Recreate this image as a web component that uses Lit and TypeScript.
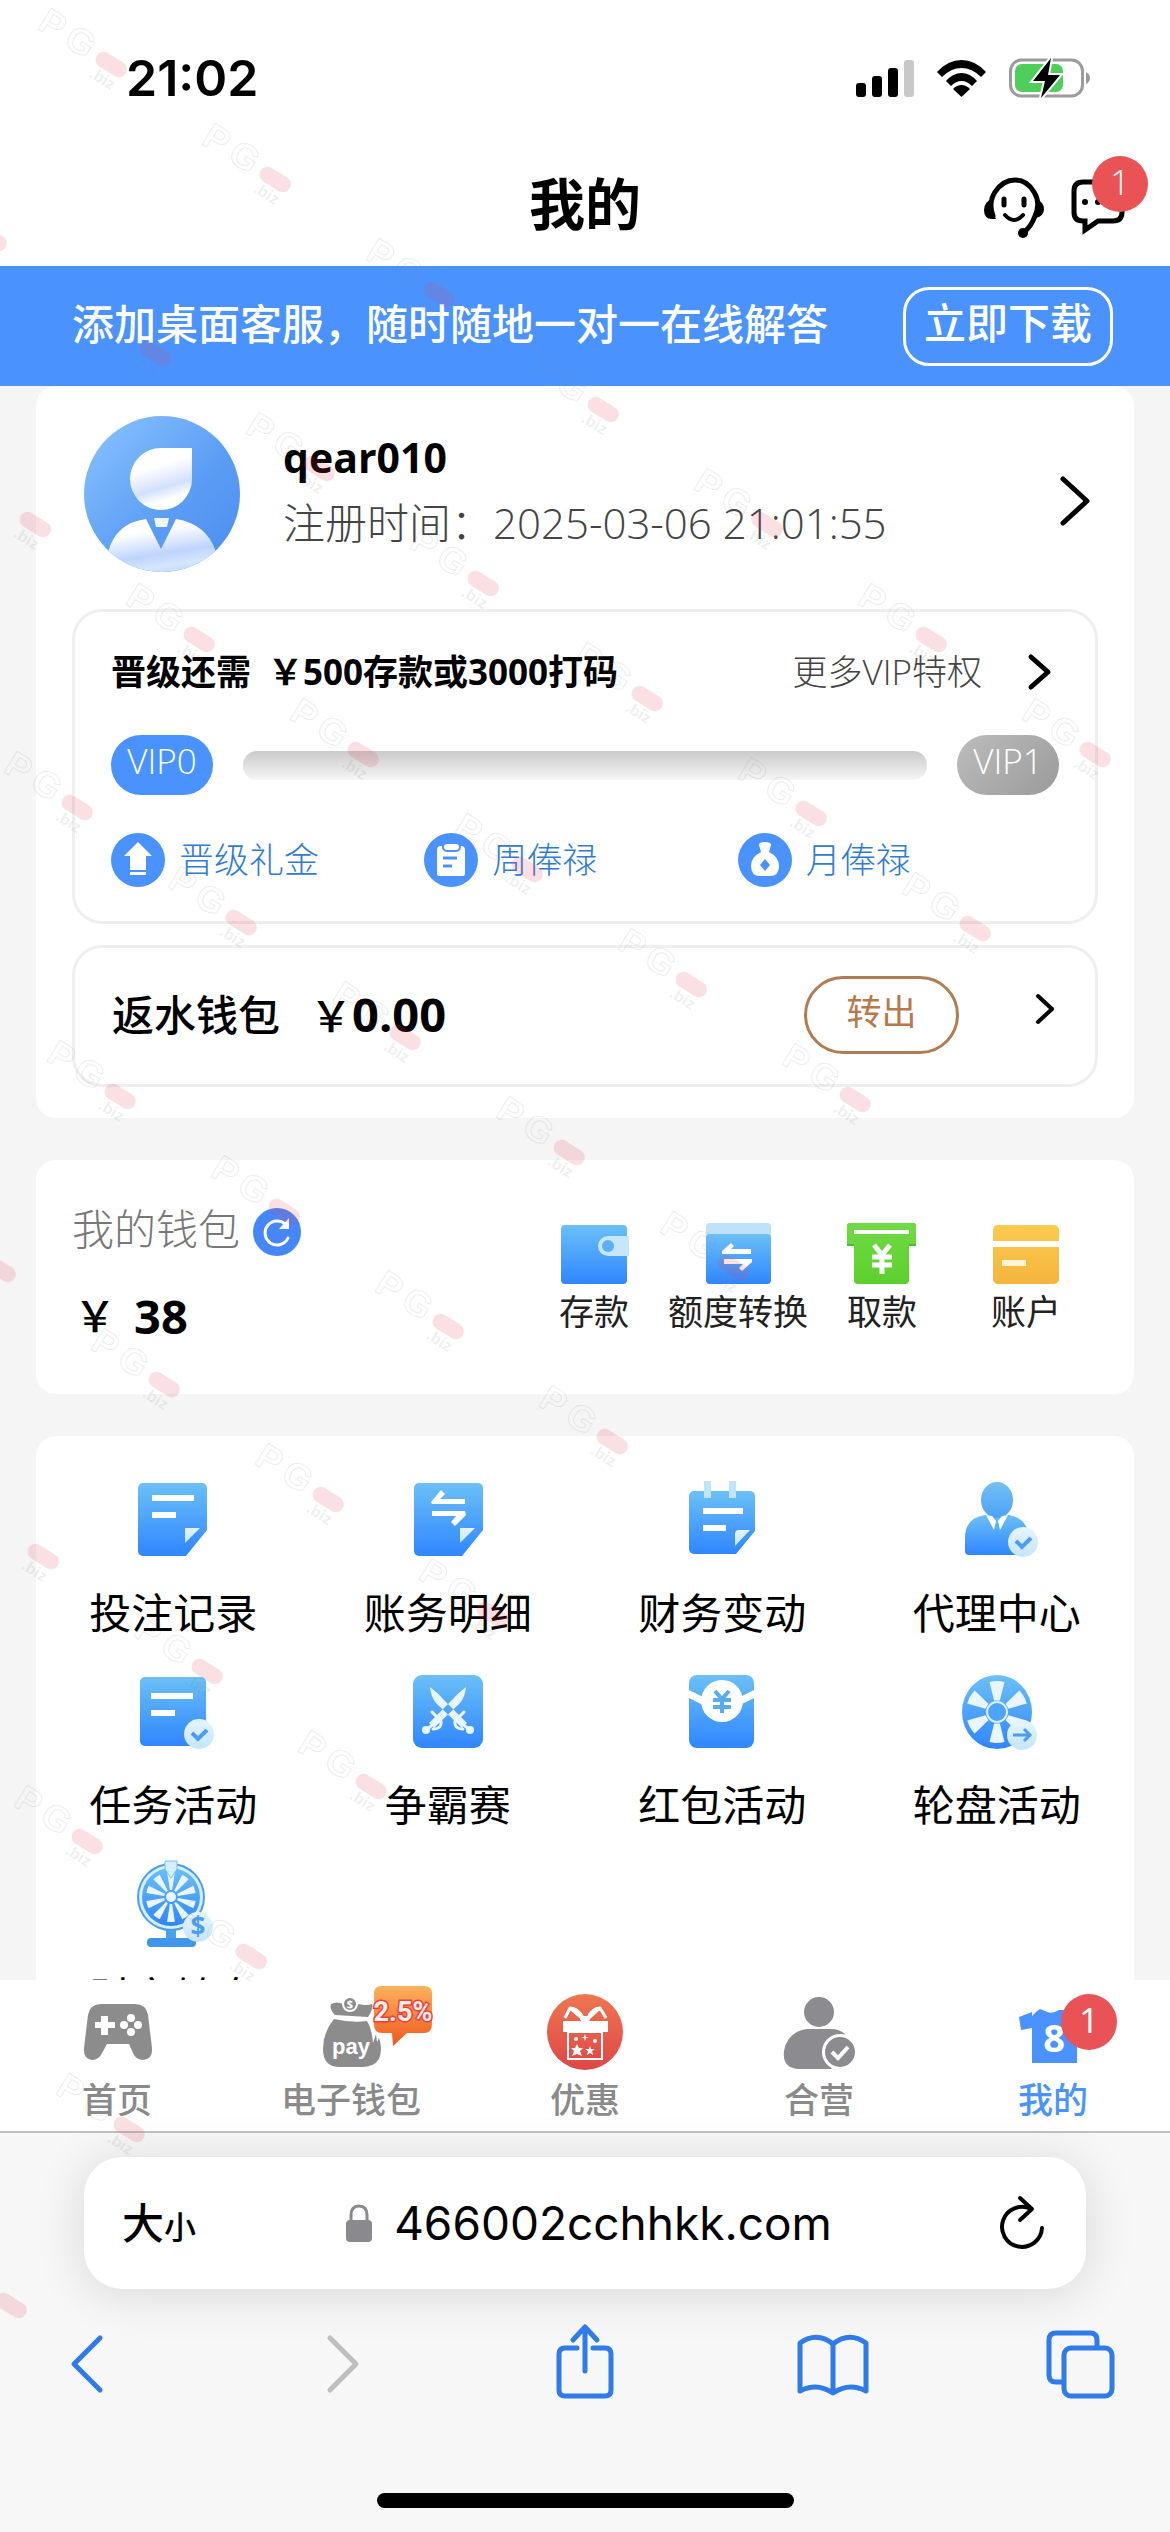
import { LitElement, html, svg, css, TemplateResult, SVGTemplateResult } from "lit";
import { customElement } from "lit/decorators.js";

/** Ring of wedges around a wheel hub. */
const wedges = (cx: number, cy: number, inner: number, outer: number, count: number, half: number) => {
  const at = (r: number, deg: number) => {
    const a = ((deg - 90) * Math.PI) / 180;
    return `${(cx + r * Math.cos(a)).toFixed(1)} ${(cy + r * Math.sin(a)).toFixed(1)}`;
  };
  return Array.from({ length: count }, (_, i) => {
    const d = (360 / count) * i;
    return svg`<path fill="#e9f6ff" d="M${at(inner, d - half)}L${at(outer, d - half)}A${outer} ${outer} 0 0 1 ${at(outer, d + half)}L${at(inner, d + half)}Z"/>`;
  });
};

const checkBadge = (cx: number, cy: number) => svg`
  <circle cx=${cx} cy=${cy} r="15" fill="url(#pale)"/>
  <path d="M${cx - 7} ${cy - 1}l6 6l9-9" fill="none" stroke="#4a9df0" stroke-width="4"/>`;

const entryIcons: Record<string, SVGTemplateResult> = {
  bets: svg`
    <path fill="url(#blue)" d="M10 3h59a5 5 0 0 1 5 5v42L53 76H10a5 5 0 0 1-5-5V8a5 5 0 0 1 5-5z"/>
    <path fill="#fff" d="M19 15h42v6H19zM19 32h24v6H19z"/>
    <path fill="url(#pale)" d="M52 48h15L52 63z"/>`,
  ledger: svg`
    <path fill="url(#blue)" d="M11 3h59a5 5 0 0 1 5 5v42L54 76H11a5 5 0 0 1-5-5V8a5 5 0 0 1 5-5z"/>
    <path fill="#fff" d="M23 22L33 10l4 4-5 5h25v5H24zM24 31h33l1 4-11 11-4-4 5-6H24z"/>
    <path fill="url(#pale)" d="M52 48h15L52 63z"/>`,
  finance: svg`
    <path fill="url(#blue)" d="M12 11h56a5 5 0 0 1 5 5v35L54 74H12a5 5 0 0 1-5-5V16a5 5 0 0 1 5-5z"/>
    <path fill="#bfe4fb" d="M22 1h7v17h-7zM47 1h7v17h-7z"/>
    <path fill="#fff" d="M21 28h40v6H21zM21 45h23v6H21z"/>
    <path fill="url(#pale)" d="M53 66V54q0-4 4-4h11z"/>`,
  agent: svg`
    <path fill="url(#blue)" d="M12 75q-4 0-4-4V58Q8 38 28 35h24q18 3 20 22v18z"/>
    <ellipse cx="40" cy="20" rx="16" ry="18" fill="url(#blueTop)"/>
    <path fill="#fff" d="M29 35l8 15 2-9-4-5zM51 35l-8 15-2-9 4-5z"/>
    ${checkBadge(66, 62)}`,
  tasks: svg`
    <rect x="7" y="5" width="66" height="69" rx="5" fill="url(#blue)"/>
    <path fill="#fff" d="M18 21h42v6H18zM18 38h24v6H18z"/>
    ${checkBadge(66, 62)}`,
  duel: svg`
    <rect x="5" y="3" width="70" height="73" rx="9" fill="url(#blue)"/>
    <g fill="#e9f6ff">
      <path d="M22 15q1 10 6 16l26 25 5-5-24-24q-4-5-13-12zM58 15q-1 10-6 16L26 56l-5-5 24-24q4-5 13-12z"/>
      <circle cx="18" cy="58" r="4"/><circle cx="62" cy="58" r="4"/>
    </g>
    <path fill="none" stroke="#e9f6ff" stroke-width="3" stroke-linecap="round" d="M57 54l5 4M23 54l-5 4M24 40l9 9M56 40l-9 9M33 49q1 8-8 8M47 49q-1 8 8 8"/>`,
  packet: svg`
    <rect x="7" y="3" width="65" height="73" rx="8" fill="url(#blue)"/>
    <path fill="#fff" d="M7 18l16 8 0 8L7 26zM72 18l-16 8 0 8 16-8z"/>
    <circle cx="40" cy="29" r="21" fill="#fff"/>
    <path fill="none" stroke="#58abf0" stroke-width="4" d="M33 19l7 8 7-8M31 28h18M31 35h18M40 27v14"/>`,
  roulette: svg`
    <ellipse cx="40" cy="40" rx="35" ry="37" fill="url(#blue)"/>
    ${wedges(40, 40, 12, 31, 6, 14)}
    <circle cx="40" cy="40" r="10" fill="#4fa3f8" stroke="#d8efff" stroke-width="2"/>
    <circle cx="65" cy="63" r="15" fill="url(#pale)"/>
    <path d="M56 63h17M67 57l6 6-6 6" fill="none" stroke="#4a9df0" stroke-width="3"/>`,
  bonus: svg`
    <path fill="#4ba0ec" d="M33 66h10v10H33z"/>
    <rect x="14" y="74" width="49" height="9" rx="4" fill="#3f96ec"/>
    <circle cx="38" cy="33" r="34" fill="#4a9df0"/>
    <circle cx="38" cy="33" r="32" fill="#d5effd"/>
    <circle cx="38" cy="33" r="29" fill="url(#blue)"/>
    ${wedges(38, 33, 7, 25, 10, 9)}
    <circle cx="38" cy="33" r="5" fill="#e9f6ff"/>
    <path fill="#d5effd" stroke="#7cc0f5" stroke-width="1" d="M32-3h12v8l-6 9-6-9z"/>
    <circle cx="65" cy="63" r="15" fill="url(#pale)"/>
    <text x="65" y="72" class="glyph" text-anchor="middle" font-size="26" fill="#4a9df0">$</text>`,
};

const walletIcons: Record<string, SVGTemplateResult> = {
  deposit: svg`
    <rect x="3" y="3" width="66" height="59" rx="4" fill="url(#blue)"/>
    <path fill="#c6e6fd" d="M71 14H50a10 10 0 0 0 0 20h21z"/>
    <circle cx="50" cy="24" r="6" fill="#5bb0f7"/>`,
  transfer: svg`
    <rect x="4" y="1" width="65" height="30" rx="4" fill="#bfe1fa"/>
    <rect x="4" y="12" width="65" height="50" rx="4" fill="url(#blue)"/>
    <path fill="#fff" d="M20 29l9-8 3 3-3 3h20v5H20zM22 37h28v3l-10 9-3-3 4-4H22z"/>`,
  withdraw: svg`
    <path fill="#4cbb2c" d="M5 1h62q3 0 3 3v20h-7V11H8v13H1V4q0-3 4-3z"/>
    <path fill="url(#green)" d="M5 1h62q3 0 3 3v18h-7v36q0 4-4 4H12q-4 0-4-4V22H1V4q0-3 4-3z"/>
    <path fill="#fff" d="M8 8h55v4H8z"/>
    <path fill="none" stroke="#fff" stroke-width="5" d="M28 23l8 10 8-10M26 35h20M26 43h20M36 33v19"/>`,
  account: svg`
    <rect x="3" y="3" width="66" height="59" rx="5" fill="url(#gold)"/>
    <path fill="#fff" d="M3 19h66v6H3z"/>
    <path fill="#fff3d6" d="M12 38h24v6H12z"/>`,
};

const perkIcons: Record<string, SVGTemplateResult> = {
  promote: svg`<path fill="#fff" d="M27 9l14 14h-6v14H19V23h-6zM19 39h16v3H19z"/>`,
  weekly: svg`
    <path fill="#fff" d="M17 13h20q4 0 4 4v24q0 2-2 2H15q-2 0-2-2V17q0-4 4-4z"/>
    <rect x="19" y="10" width="17" height="8" rx="4" fill="#fff" stroke="#4a93ff" stroke-width="2"/>
    <path stroke="#4a93ff" stroke-width="3" d="M19 25h14M19 33h9"/>`,
  monthly: svg`
    <path fill="#fff" d="M21 12q0-3 6-3t6 3l-2 7q10 5 10 14 0 10-9 10H22q-9 0-9-10 0-9 10-14z"/>
    <path fill="#4a93ff" d="M27 26l5 6-5 6-5-6z"/>`,
};

const tabIcons: Record<string, SVGTemplateResult> = {
  home: svg`
    <path fill="#8c8c8c" d="M34 12h34q11 0 13 11l4 33q1 11-9 12-7 0-10-7l-4-9H40l-5 9q-3 7-10 7-9-1-8-12l4-33q2-11 13-11z"/>
    <path fill="#fff" d="M34 24h7v6h7v6h-7v7h-7v-7h-6v-6h6z"/>
    <g fill="#fff"><circle cx="64" cy="26" r="4"/><circle cx="64" cy="40" r="4"/><circle cx="57" cy="33" r="4"/><circle cx="71" cy="33" r="4"/></g>`,
  epay: svg`
    <path fill="#8c8c8c" d="M30 12q6-3 12 0l7 2 8-2q9 2 14 0 2 4-4 13l-33-2q-6-6-4-11z"/>
    <circle cx="49" cy="12" r="7" fill="#8c8c8c" stroke="#fff" stroke-width="2"/>
    <text x="49" y="16" class="glyph" text-anchor="middle" font-size="11" fill="#fff">$</text>
    <path fill="#8c8c8c" d="M33 27q17 4 33 2 5 8 6 22l3-9 1 8 2-4q4 11 0 21-5 8-17 8H39q-17 0-17-18 0-17 11-30z"/>
    <text x="50" y="62" class="pay" text-anchor="middle" font-size="22" fill="#fff">pay</text>
    <path fill="url(#orange)" d="M80-6h43q8 0 8 8v30q0 9-8 9h-17L92 54l-1-13H81q-8 0-8-9V2q0-8 7-8z"/>
    <text x="102" y="29" class="rate" text-anchor="middle" font-size="27" fill="#ffecec" stroke="#e8433a" stroke-width="3" paint-order="stroke">2.5%</text>`,
  offers: svg`
    <circle cx="50" cy="40" r="38" fill="url(#coral)"/>
    <path fill="#fff" d="M28 29h45v11H28z"/>
    <path fill="none" stroke="#fff" stroke-width="2" d="M33 40h34v27H33z"/>
    <path fill="none" stroke="#fff" stroke-width="3" stroke-linejoin="round" d="M48 27L35 16l-5 10M53 27l12-11 6 10M35 16q8 0 13 10M65 16q-8 0-12 10"/>
    <ellipse cx="50" cy="27" rx="5" ry="3" fill="#fff"/>
    <path fill="#fff" d="M42 52l2 4h4l-3 3 2 5-5-2-5 2 2-5-3-3h4zM55 54l1 3h4l-3 2 1 4-3-2-3 2 1-4-3-2h4zM50 42l1 3h3l-3 1-1 3-1-3-3-1h3z"/>
    <circle cx="41" cy="47" r="2" fill="#fff"/><circle cx="60" cy="49" r="2" fill="#fff"/>`,
  partner: svg`
    <circle cx="50" cy="20" r="15" fill="#8c8c90"/>
    <path fill="#8c8c90" d="M38 37h24q16 0 21 18v22H30q-17-1-15-18 3-19 23-22z"/>
    <path fill="#fff" d="M62 78h26V42H76z"/>
    <circle cx="71" cy="60" r="18" fill="#fff"/>
    <circle cx="71" cy="60" r="15" fill="#8c8c90"/>
    <path d="M63 60l6 6 10-11" fill="none" stroke="#fff" stroke-width="4"/>`,
  mine: svg`
    <path fill="#4a93ff" d="M16 25l13-5v4l5-5 3-2 5 2q6 4 14-1l18 0v53H29V36l-11 2z"/>
    <text x="51" y="60" class="glyph" text-anchor="middle" font-size="38" fill="#fff">8</text>`,
};

/** Watermark diagonals: first mark and how many follow down the slope. */
const markRows = [
  { x: 112, y: 65, n: 7 },
  { x: -8, y: 239, n: 7 },
  { x: 36, y: 525, n: 6 },
  { x: 78, y: 808, n: 5 },
  { x: 121, y: 1097, n: 4 },
  { x: 1, y: 1270, n: 4 },
  { x: 44, y: 1557, n: 3 },
  { x: 88, y: 1842, n: 2 },
  { x: 130, y: 2130, n: 1 },
  { x: 12, y: 2306, n: 1 },
];

@customElement("app-root")
export class AppRoot extends LitElement {
  private perks = [
    { icon: "promote", label: "晋级礼金" },
    { icon: "weekly", label: "周俸禄" },
    { icon: "monthly", label: "月俸禄" },
  ];
  private walletActions = [
    { icon: "deposit", label: "存款" },
    { icon: "transfer", label: "额度转换" },
    { icon: "withdraw", label: "取款" },
    { icon: "account", label: "账户" },
  ];
  private entries = [
    { icon: "bets", label: "投注记录" },
    { icon: "ledger", label: "账务明细" },
    { icon: "finance", label: "财务变动" },
    { icon: "agent", label: "代理中心" },
    { icon: "tasks", label: "任务活动" },
    { icon: "duel", label: "争霸赛" },
    { icon: "packet", label: "红包活动" },
    { icon: "roulette", label: "轮盘活动" },
    { icon: "bonus", label: "财富转盘" },
  ];
  private tabs = [
    { icon: "home", label: "首页" },
    { icon: "epay", label: "电子钱包" },
    { icon: "offers", label: "优惠" },
    { icon: "partner", label: "合营" },
    { icon: "mine", label: "我的", badge: 1 },
  ];

  static styles = css`
    :host {
      display: flex;
      flex-direction: column;
      position: relative;
      height: 100vh;
      overflow: hidden;
      background: #fff;
      color: #000;
      font-family: "Open Sans", "Noto Sans CJK SC", sans-serif;
      font-size: 42px;
      line-height: 50px;
    }
    button, a {
      font: inherit;
      color: inherit;
      background: none;
      border: 0;
      padding: 0;
      text-decoration: none;
      cursor: pointer;
    }
    h1, p { margin: 0; }
    svg { display: block; overflow: visible; flex: none; }
    .defs { position: absolute; }
    .glyph { font-family: "Open Sans", sans-serif; font-weight: 700; }
    .pay { font-family: "Liberation Sans", sans-serif; font-weight: 700; }
    .rate { font-family: "Liberation Sans Narrow", "Roboto", sans-serif; font-weight: 700; }

    .status {
      display: flex;
      align-items: center;
      height: 144px;
      box-sizing: border-box;
      padding: 12px 80px 0 126px;
      gap: 22px;
    }
    .time {
      flex: 1;
      font-family: Inter, sans-serif;
      font-weight: 600;
      font-size: 50px;
    }
    .header {
      display: grid;
      grid-template-columns: 1fr auto 1fr;
      align-items: center;
      height: 122px;
      padding: 0 46px;
    }
    .title { grid-column: 2; font-size: 56px; line-height: 76px; font-weight: 700; padding-bottom: 4px; }
    .tools { display: flex; justify-content: flex-end; align-items: center; gap: 28px; padding-top: 3px; }
    .has-badge { position: relative; }
    .badge {
      position: absolute;
      display: flex;
      align-items: center;
      justify-content: center;
      width: 56px;
      height: 56px;
      box-sizing: border-box;
      padding-bottom: 4px;
      border-radius: 50%;
      background: #ea5356;
      color: #fff;
      font-size: 35px;
    }
    .tools .badge { top: -24px; right: -24px; font-weight: 300; }
    .banner {
      display: flex;
      align-items: center;
      justify-content: space-between;
      height: 120px;
      padding: 0 57px 0 72px;
      background: #4a93ff;
      color: #fff;
      font-weight: 500;
    }
    .slogan { padding-bottom: 4px; }
    .download {
      height: 79px;
      padding: 0 18px 6px;
      border: 3px solid #fff;
      border-radius: 26px;
    }
    .content {
      flex: 1;
      min-height: 0;
      overflow: hidden;
      display: flex;
      flex-direction: column;
      gap: 42px;
      padding: 0 36px;
      background: #f5f5f5;
    }
    .card { flex: none; border-radius: 20px; background: #fff; }
    .profile { padding: 30px 36px 31px; }
    .user { display: flex; align-items: center; padding: 0 8px 37px 12px; gap: 43px; }
    .user button { padding-top: 14px; }
    .who { flex: 1; line-height: 65px; padding-bottom: 8px; }
    .name { font-weight: 700; font-size: 41px; }
    .since { font-weight: 300; color: #444; }
    .box {
      border: 3px solid #efefef;
      border-radius: 30px;
      font-size: 35px;
    }
    .vip { display: grid; gap: 38px; padding: 35px 36px 34px; margin-bottom: 21px; }
    .next { display: flex; align-items: center; padding-right: 8px; }
    .goal { flex: 1; display: flex; gap: 17px; font-weight: 700; }
    .more { display: flex; align-items: center; gap: 46px; font-weight: 300; color: #444; }
    .level { display: flex; align-items: center; gap: 30px; }
    .pill {
      width: 102px;
      height: 60px;
      box-sizing: border-box;
      padding-bottom: 8px;
      border-radius: 30px;
      background: #4a93ff;
      color: #fff;
      font-weight: 300;
      line-height: 52px;
      text-align: center;
    }
    .pill.off { background: linear-gradient(135deg, #bdbdbd, #9a9a9a); }
    .track {
      flex: 1;
      height: 29px;
      border-radius: 14px;
      background: linear-gradient(#cacaca, #f6f6f6);
    }
    .perks { display: grid; grid-template-columns: repeat(3, 1fr); padding-right: 8px; }
    .perk { display: flex; align-items: center; gap: 14px; font-weight: 300; color: #2f7bd6; height: 54px; }
    .rebate { display: flex; align-items: center; height: 134px; padding: 0 40px 2px 37px; }
    .rebate-name { font-size: 42px; font-weight: 500; }
    .money { font-size: 47px; font-weight: 700; }
    .yen { font-size: 42px; font-weight: 500; }
    .rebate .money { flex: 1; padding-left: 30px; }
    .out {
      width: 155px;
      height: 78px;
      padding-bottom: 6px;
      border: 3px solid #b07d52;
      border-radius: 39px;
      color: #b8784a;
      margin-right: 76px;
    }
    .rebate .open { padding-bottom: 12px; }
    .wallet { display: flex; justify-content: space-between; padding: 44px 36px 53px; }
    .balance { display: grid; align-content: start; gap: 37px; }
    .balance-name { display: flex; align-items: center; gap: 13px; height: 50px; font-weight: 300; color: #777; }
    .balance-name button { padding-top: 6px; }
    .balance .money { display: flex; align-items: center; gap: 18px; padding-left: 2px; height: 50px; }
    .actions { display: grid; grid-template-columns: repeat(4, 144px); padding-top: 18px; }
    .action {
      display: grid;
      justify-items: center;
      align-content: start;
      gap: 3px;
      font-size: 35px;
      color: #222;
      white-space: nowrap;
    }
    .entries { display: grid; grid-template-columns: repeat(4, 1fr); row-gap: 34px; padding: 44px 0; }
    .entry { display: grid; justify-items: center; gap: 28px; }
    .tabs {
      display: grid;
      grid-template-columns: repeat(5, 1fr);
      padding: 12px 0 11px;
      border-bottom: 2px solid #c2c2c4;
      background: #fff;
    }
    .tab {
      display: grid;
      justify-items: center;
      gap: 8px;
      font-size: 35px;
      line-height: 40px;
      font-weight: 500;
      color: #8a8a8a;
    }
    .tab.on { color: #4a93ff; }
    .tab .badge { top: 2px; left: 58px; font-weight: 400; }
    .browser { padding: 24px 0; background: #f7f7f7; }
    .address {
      display: flex;
      align-items: center;
      height: 132px;
      margin: 0 84px 34px;
      padding: 0 42px 0 38px;
      box-sizing: border-box;
      border-radius: 38px;
      background: #fff;
      box-shadow: 0 4px 50px rgba(0, 0, 0, 0.13);
    }
    .size { width: 76px; text-align: left; white-space: nowrap; font-weight: 500; padding-top: 4px; }
    .small { font-size: 32px; }
    .url {
      flex: 1;
      display: flex;
      align-items: center;
      justify-content: center;
      gap: 22px;
      padding-left: 12px;
      font-family: Inter, sans-serif;
      font-size: 46px;
    }
    .reload { width: 76px; display: flex; justify-content: flex-end; }
    .toolbar { display: flex; justify-content: space-between; padding: 0 50px; }
    .handle { width: 417px; height: 15px; margin: 90px auto 0; border-radius: 8px; background: #000; }
    .marks { position: absolute; inset: 0; width: 100%; height: 100%; overflow: hidden; pointer-events: none; }
    .mark { font-family: "Liberation Sans", sans-serif; font-weight: 700; }
  `;

  private defs() {
    const stops = (id: string, a: string, b: string) => svg`
      <linearGradient id=${id} x1="0" y1="0" x2="0" y2="1">
        <stop offset="0" stop-color=${a}/><stop offset="1" stop-color=${b}/>
      </linearGradient>`;
    return html`<svg class="defs" width="0" height="0" aria-hidden="true"><defs>
      ${stops("blue", "#6bc0f6", "#2f86ff")}
      ${stops("blueTop", "#72c0f5", "#4da2f5")}
      ${stops("pale", "#e6f5ff", "#c4e5fb")}
      ${stops("green", "#72d946", "#5bd02c")}
      ${stops("gold", "#fbcb4e", "#f5b43d")}
      ${stops("orange", "#fbb25c", "#f2571d")}
      ${stops("coral", "#ee7650", "#df4646")}
      <linearGradient id="face" x1="0" y1="0" x2="1" y2="1">
        <stop offset="0" stop-color="#8bc4ff"/><stop offset="0.6" stop-color="#5a9cf5"/><stop offset="1" stop-color="#4a8cec"/>
      </linearGradient>
      <linearGradient id="sheen" x1="0.3" y1="0" x2="0.6" y2="1">
        <stop offset="0.3" stop-color="#fff"/><stop offset="0.65" stop-color="#d3e0fc"/><stop offset="0.85" stop-color="#fff"/>
      </linearGradient>
      <linearGradient id="sheenLow" x1="0.35" y1="0" x2="0.65" y2="1">
        <stop offset="0.2" stop-color="#fff"/><stop offset="0.6" stop-color="#bed4fd"/><stop offset="0.8" stop-color="#d4e6ff"/><stop offset="1" stop-color="#b8dafc"/>
      </linearGradient>
      <clipPath id="disc"><circle cx="78" cy="78" r="78"/></clipPath>
    </defs></svg>`;
  }

  private chevron(w: number, h: number, stroke: number): TemplateResult {
    return html`<svg width=${w} height=${h} aria-hidden="true">
      <path d="M3 3L${w - 3} ${h / 2}L3 ${h - 3}" fill="none" stroke="#000" stroke-width=${stroke} stroke-linecap="round" stroke-linejoin="round"/>
    </svg>`;
  }

  private statusBar() {
    return html`<div class="status">
      <span class="time">21:02</span>
      <svg width="58" height="38" role="img" aria-label="信号">
        <rect y="24" width="10" height="14" rx="3"/><rect x="16" y="17" width="10" height="21" rx="3"/>
        <rect x="32" y="9" width="10" height="29" rx="3"/><rect x="48" y="1" width="10" height="37" rx="3" fill="#c8c8c8"/>
      </svg>
      <svg width="51" height="38" role="img" aria-label="无线网络">
        <path d="M1 13Q12 1 25.500 1T50 13l-5 5Q36 9 25.500 9T6 18z"/>
        <path d="M10 22q7-8 15.500-8T41 22l-5 5q-5-5-10.500-5T15 27z"/>
        <path d="M17 30q4-4 8.500-4t8.500 4l-8.500 8z"/>
      </svg>
      <svg width="81" height="40" role="img" aria-label="充电中">
        <rect x="1.500" y="2" width="72" height="36" rx="11" fill="none" stroke="#9b9b9b" stroke-width="3"/>
        <rect x="6" y="6" width="48" height="28" rx="7" fill="#50ce5c"/>
        <path d="M77 14q4 2 4 6t-4 6z" fill="#9b9b9b"/>
        <path d="M42 0L24 23h12l-4 17 19-23H39z" stroke="#fff" stroke-width="4" paint-order="stroke"/>
      </svg>
    </div>`;
  }

  private header() {
    return html`<header class="header">
      <h1 class="title">我的</h1>
      <div class="tools">
        <button aria-label="客服">
          <svg width="60" height="60">
            <path fill="none" stroke="#000" stroke-width="5" stroke-linecap="round" d="M9 39Q4 26 11 15 19 3 31 3t19 12q7 11 1 24-4 11-11 16"/>
            <path d="M8 22Q0 25 0 33q0 9 8 9h4Q6 32 8 22zM52 22q8 3 8 10 0 7-8 9 2-9 0-19z"/>
            <circle cx="39" cy="56" r="5"/>
            <path stroke="#000" stroke-width="5" stroke-linecap="round" d="M20 22v6M40 22v6"/>
            <path fill="none" stroke="#000" stroke-width="4" stroke-linecap="round" d="M21 38q9 10 18 0"/>
          </svg>
        </button>
        <button class="has-badge" aria-label="消息">
          <svg width="52" height="54">
            <path fill="none" stroke="#000" stroke-width="5" d="M11 2h30q9 0 9 9v21q0 9-9 9H26L13 50v-9h-2q-9 0-9-9V11q0-9 9-9z"/>
            <circle cx="13" cy="22" r="3"/><circle cx="26" cy="22" r="3"/><circle cx="39" cy="22" r="3"/>
          </svg>
          <span class="badge">1</span>
        </button>
      </div>
    </header>`;
  }

  private profile() {
    return html`<section class="card profile">
      <div class="user">
        <svg width="156" height="156" role="img" aria-label="头像">
          <circle cx="78" cy="78" r="78" fill="url(#face)"/>
          <path fill="url(#sheen)" d="M77 32h31v31a31 31 0 1 1-31-31z"/>
          <g clip-path="url(#disc)">
            <path fill="url(#sheenLow)" d="M24 136q8-29 38-33l15 30 15-30q31 5 40 33v24H24z"/>
            <path fill="#f0f6ff" d="M70 102h15l-2 9H72z"/>
          </g>
        </svg>
        <div class="who">
          <p class="name">qear010</p>
          <p class="since">注册时间：2025-03-06 21:01:55</p>
        </div>
        <button aria-label="个人资料">${this.chevron(30, 50, 5)}</button>
      </div>
      <div class="box vip">
        <div class="next">
          <span class="goal"><span>晋级还需</span><span>￥500存款或3000打码</span></span>
          <a class="more" href="#vip">更多VIP特权 ${this.chevron(23, 36, 5)}</a>
        </div>
        <div class="level">
          <span class="pill">VIP0</span>
          <span class="track"></span>
          <span class="pill off">VIP1</span>
        </div>
        <div class="perks">
          ${this.perks.map(
            (p) => html`<a class="perk" href="#${p.icon}">
              <svg width="54" height="54" aria-hidden="true"><circle cx="27" cy="27" r="27" fill="#4a93ff"/>${perkIcons[p.icon]}</svg>
              ${p.label}
            </a>`
          )}
        </div>
      </div>
      <div class="box rebate">
        <span class="rebate-name">返水钱包</span>
        <span class="money"><span class="yen">￥</span>0.00</span>
        <button class="out">转出</button>
        <button class="open" aria-label="返水详情">${this.chevron(20, 32, 4)}</button>
      </div>
    </section>`;
  }

  private wallet() {
    return html`<section class="card wallet">
      <div class="balance">
        <div class="balance-name">
          我的钱包
          <button aria-label="刷新余额">
            <svg width="48" height="48">
              <circle cx="24" cy="24" r="24" fill="#4587f8"/>
              <path fill="none" stroke="#fff" stroke-width="3" stroke-linecap="round" d="M35 30a12 12 0 1 1-2-13"/>
              <path fill="#fff" d="M36 10v11H26z"/>
            </svg>
          </button>
        </div>
        <span class="money"><span class="yen">￥</span><span>38</span></span>
      </div>
      <div class="actions">
        ${this.walletActions.map(
          (a) => html`<a class="action" href="#${a.icon}">
            <svg width="72" height="62" aria-hidden="true">${walletIcons[a.icon]}</svg>${a.label}
          </a>`
        )}
      </div>
    </section>`;
  }

  private browserBar() {
    const blue = "#2f7bea";
    return html`<footer class="browser">
      <div class="address">
        <button class="size">大<span class="small">小</span></button>
        <button class="url">
          <svg width="26" height="38" aria-hidden="true">
            <rect y="16" width="26" height="22" rx="4" fill="#8a8a8e"/>
            <path d="M5 18v-7q0-9 8-9t8 9v7" fill="none" stroke="#8a8a8e" stroke-width="3"/>
          </svg>
          466002cchhkk.com
        </button>
        <button class="reload" aria-label="重新载入">
          <svg width="44" height="54">
            <path d="M42 32A20 20 0 1 1 31 13" fill="none" stroke="#000" stroke-width="4" stroke-linecap="round"/>
            <path d="M20 2l12 11-12 11" fill="none" stroke="#000" stroke-width="4" stroke-linecap="round" stroke-linejoin="round"/>
          </svg>
        </button>
      </div>
      <nav class="toolbar">
        <button aria-label="后退"><svg width="72" height="80">
          <path d="M50 15L24 41l26 26" fill="none" stroke=${blue} stroke-width="5" stroke-linecap="round" stroke-linejoin="round"/></svg></button>
        <button aria-label="前进"><svg width="72" height="80">
          <path d="M30 15l26 26-26 26" fill="none" stroke="#bfbfc0" stroke-width="5" stroke-linecap="round" stroke-linejoin="round"/></svg></button>
        <button aria-label="共享"><svg width="72" height="80">
          <path d="M28 25H16q-6 0-6 6v36q0 6 6 6h40q6 0 6-6V31q0-6-6-6H44M36 48V5M24 17L36 4l12 13" fill="none" stroke=${blue} stroke-width="5" stroke-linecap="round" stroke-linejoin="round"/></svg></button>
        <button aria-label="书签"><svg width="72" height="80">
          <path d="M34 21Q18 8 1 20v48q17-9 33 2 16-11 33-2V20Q50 8 34 21zV69" fill="none" stroke=${blue} stroke-width="5" stroke-linejoin="round"/></svg></button>
        <button aria-label="标签页"><svg width="72" height="80">
          <rect x="16" y="25" width="48" height="48" rx="7" fill="none" stroke=${blue} stroke-width="5"/>
          <path d="M15 59H8q-7 0-7-7V17q0-7 7-7h34q7 0 7 7v6" fill="none" stroke=${blue} stroke-width="5"/></svg></button>
      </nav>
      <div class="handle"></div>
    </footer>`;
  }

  private watermark() {
    const letter = (dx: number, glyph: string) => svg`<text x=${dx} y="9" font-size="36" fill="none" stroke="#808080" stroke-opacity="0.17" stroke-width="1">${glyph}</text>`;
    const mark = (x: number, y: number) => svg`<g transform="translate(${x} ${y}) rotate(32)" class="mark">
      ${x > 75 ? letter(-84, "P") : null}
      ${x > 50 ? letter(-53, "G") : null}
      <rect x="-18" y="-8" width="34" height="16" rx="8" fill="#e8404f" fill-opacity="0.16"/>
      ${x > 20 ? svg`<text x="-14" y="22" font-size="16" fill="#808080" fill-opacity="0.14">.biz</text>` : null}
    </g>`;
    return html`<svg class="marks" aria-hidden="true">
      ${markRows.map((r) => Array.from({ length: r.n }, (_, i) => mark(r.x + 164 * i, r.y + 115 * i)))}
    </svg>`;
  }

  render() {
    return html`
      ${this.defs()}
      ${this.statusBar()}
      ${this.header()}
      <div class="banner">
        <span class="slogan">添加桌面客服，随时随地一对一在线解答</span>
        <button class="download">立即下载</button>
      </div>
      <main class="content">
        ${this.profile()}
        ${this.wallet()}
        <section class="card entries">
          ${this.entries.map(
            (e) => html`<a class="entry" href="#${e.icon}">
              <svg width="80" height="80" aria-hidden="true">${entryIcons[e.icon]}</svg>${e.label}
            </a>`
          )}
        </section>
      </main>
      <nav class="tabs">
        ${this.tabs.map(
          (t) => html`<a class="tab ${t.badge ? "on" : ""}" href="#${t.icon}">
            <span class="has-badge">
              <svg width="100" height="80" aria-hidden="true">${tabIcons[t.icon]}</svg>
              ${t.badge ? html`<span class="badge">${t.badge}</span>` : null}
            </span>
            ${t.label}
          </a>`
        )}
      </nav>
      ${this.browserBar()}
      ${this.watermark()}
    `;
  }
}
